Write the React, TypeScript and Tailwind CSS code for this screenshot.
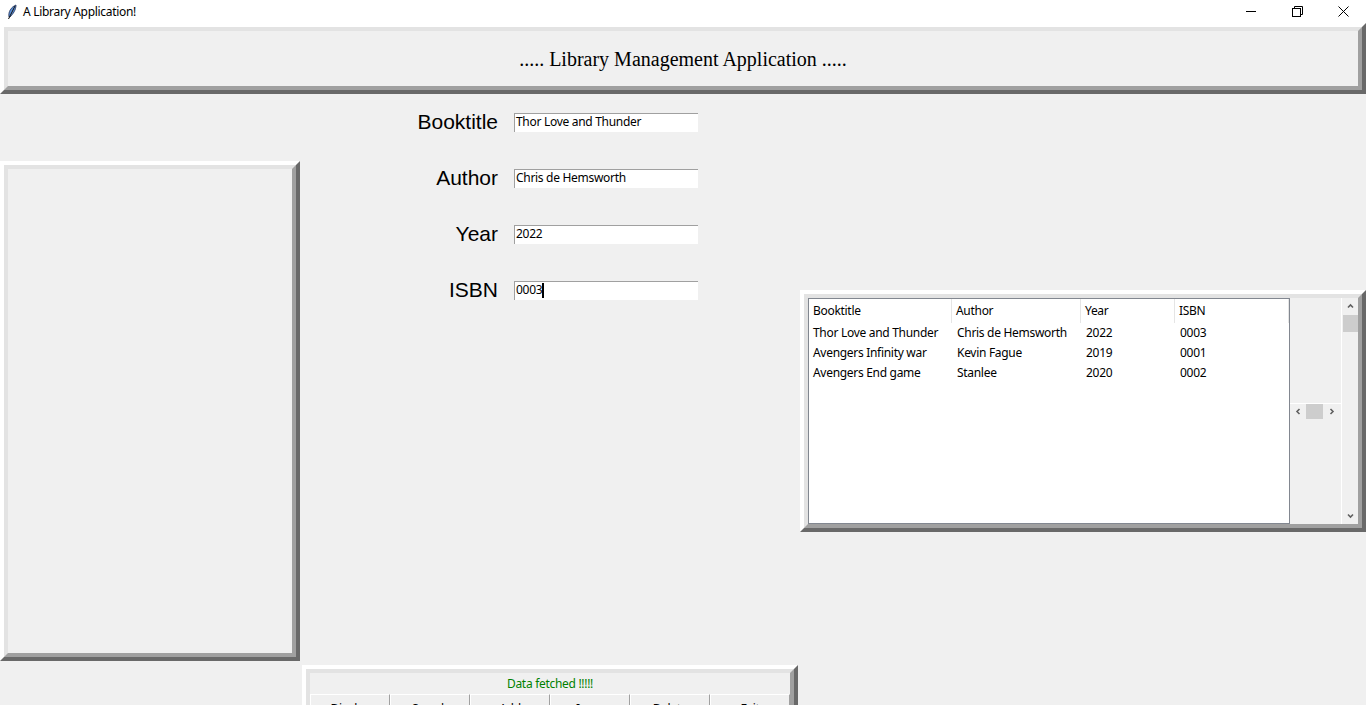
import React from "react";

const ui = "font-['Noto_Sans',sans-serif] tracking-[-0.3px]";

// tk style raised frame (bd=8)
const Raised = ({ className = "", children }: { className?: string; children?: React.ReactNode }) => (
  <div className={`border-4 border-t-white border-l-white border-r-[#696969] border-b-[#696969] ${className}`}>
    <div className="h-full border-4 border-t-[#e3e3e3] border-l-[#e3e3e3] border-r-[#a0a0a0] border-b-[#a0a0a0]">
      {children}
    </div>
  </div>
);

const FIELDS = [
  { label: "Booktitle", value: "Thor Love and Thunder" },
  { label: "Author", value: "Chris de Hemsworth" },
  { label: "Year", value: "2022" },
  { label: "ISBN", value: "0003", caret: true },
];

const COLS = [
  { name: "Booktitle", w: "w-[143px]" },
  { name: "Author", w: "w-[129px]" },
  { name: "Year", w: "w-[94px]" },
  { name: "ISBN", w: "w-[114px]" },
];

const ROWS = [
  ["Thor Love and Thunder", "Chris de Hemsworth", "2022", "0003"],
  ["Avengers Infinity war", "Kevin Fague", "2019", "0001"],
  ["Avengers End game", "Stanlee", "2020", "0002"],
];

const BUTTONS = ["Display", "Search", "Add", "Issue", "Delete", "Exit"];

const Feather = () => (
  <svg width="10" height="16" viewBox="0 0 10 16">
    <path d="M9 1 C4 3 1 8 2 13 L3 13 C6 10 9 6 9 1 Z" fill="#5b8fd6" stroke="#1e2f55" strokeWidth="0.8" />
    <path d="M8 2 L1.5 15" stroke="#111" strokeWidth="1" />
  </svg>
);

const Chevron = ({ dir }: { dir: "up" | "down" | "left" | "right" }) => {
  const d = {
    up: "M1 4.5 L3.5 2 L6 4.5",
    down: "M1 2.5 L3.5 5 L6 2.5",
    left: "M4.5 1 L2 3.5 L4.5 6",
    right: "M2.5 1 L5 3.5 L2.5 6",
  }[dir];
  return (
    <svg width="7" height="7" viewBox="0 0 7 7">
      <path d={d} fill="none" stroke="#606060" strokeWidth="1.6" />
    </svg>
  );
};

export default function App() {
  return (
    <div className={`w-[1366px] h-[705px] overflow-hidden bg-[#f0f0f0] flex flex-col ${ui}`}>
      {/* Title bar */}
      <div className="h-[23px] bg-white flex items-center shrink-0">
        <div className="w-[23px] flex justify-center">
          <Feather />
        </div>
        <span className="text-[12px] text-black">A Library Application!</span>
        <div className="ml-auto flex h-full">
          <div className="w-[46px] flex items-center justify-center">
            <div className="w-[10px] h-px bg-black" />
          </div>
          <div className="w-[46px] flex items-center justify-center">
            <svg width="11" height="11" viewBox="0 0 11 11">
              <path d="M2.5 2.5 V0.5 H10.5 V8.5 H8.5" fill="none" stroke="#000" />
              <rect x="0.5" y="2.5" width="8" height="8" fill="none" stroke="#000" />
            </svg>
          </div>
          <div className="w-[46px] flex items-center justify-center">
            <svg width="11" height="11" viewBox="0 0 11 11">
              <path d="M0.5 0.5 L10.5 10.5 M10.5 0.5 L0.5 10.5" stroke="#000" />
            </svg>
          </div>
        </div>
      </div>

      {/* Heading */}
      <Raised className="h-[71px] shrink-0">
        <div className="h-full flex items-center justify-center">
          <span className="font-['Liberation_Serif',serif] tracking-normal text-[20px] text-black">
            ..... Library Management Application .....
          </span>
        </div>
      </Raised>

      <div className="flex flex-1">
        {/* Left panel */}
        <div className="w-[300px] pt-[67px]">
          <Raised className="h-[500px]" />
        </div>

        {/* Form + buttons */}
        <div className="w-[500px] flex flex-col">
          {FIELDS.map((f) => (
            <div key={f.label} className="h-[56px] flex items-center">
              <div className="w-[198px] text-right font-['Liberation_Sans',sans-serif] tracking-normal text-[21px] text-black">
                {f.label}
              </div>
              <div className="ml-[16px] w-[184px] h-[19px] bg-white border-t border-l border-[#a0a0a0] flex items-center pl-[1px] pb-[1px] text-[12px] text-black">
                <span>{f.value}</span>
                {f.caret && <span className="w-[2px] h-[15px] bg-black" />}
              </div>
            </div>
          ))}

          <Raised className="mt-[347px] ml-[2px] w-[496px] h-[80px]">
            <div className="h-[21px] flex items-center justify-center text-[12px] text-[#008000]">
              Data fetched !!!!!
            </div>
            <div className="flex">
              {BUTTONS.map((b) => (
                <div
                  key={b}
                  className="w-[80px] h-[30px] border-t border-l border-white border-r border-r-[#a0a0a0] flex justify-center pt-[5px] text-[12px] text-black"
                >
                  {b}
                </div>
              ))}
            </div>
          </Raised>
        </div>

        {/* Table */}
        <div className="w-[566px] pt-[196px]">
          <Raised className="h-[242px]">
            <div className="h-full flex">
              <div className="w-[482px] h-full bg-white border border-[#828790] text-[12px] text-black">
                <div className="flex h-[24px]">
                  {COLS.map((c) => (
                    <div key={c.name} className={`${c.w} border-r border-[#e5e5e5] pl-[4px] flex items-center`}>
                      {c.name}
                    </div>
                  ))}
                </div>
                {ROWS.map((r) => (
                  <div key={r[3]} className="flex h-[20px] items-center">
                    {r.map((cell, i) => (
                      <div key={i} className={`${COLS[i].w} ${i > 0 ? "pl-[5px]" : "pl-[4px]"}`}>
                        {cell}
                      </div>
                    ))}
                  </div>
                ))}
              </div>

              {/* horizontal scrollbar area */}
              <div className="w-[51px] h-full flex flex-col justify-center">
                <div className="h-[17px] border-t border-white flex items-center">
                  <div className="w-[16px] flex justify-center">
                    <Chevron dir="left" />
                  </div>
                  <div className="w-[17px] h-[15px] bg-[#cdcdcd]" />
                  <div className="w-[17px] flex justify-center">
                    <Chevron dir="right" />
                  </div>
                </div>
              </div>

              {/* vertical scrollbar */}
              <div className="w-[17px] h-full border-l border-white flex flex-col items-center">
                <div className="h-[17px] flex items-center justify-center">
                  <Chevron dir="up" />
                </div>
                <div className="w-[15px] h-[17px] bg-[#cdcdcd]" />
                <div className="flex-1" />
                <div className="h-[17px] flex items-center justify-center">
                  <Chevron dir="down" />
                </div>
              </div>
            </div>
          </Raised>
        </div>
      </div>
    </div>
  );
}
